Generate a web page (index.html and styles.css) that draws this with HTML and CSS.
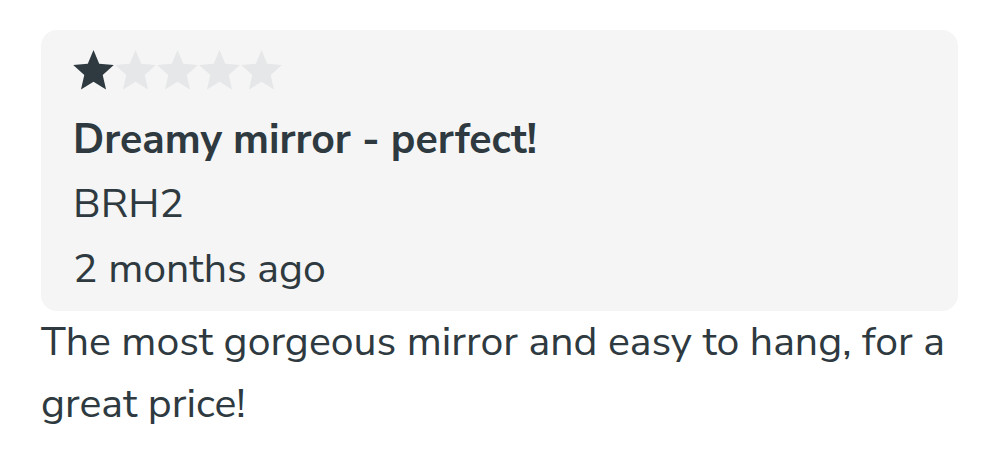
FILE: index.html
```html
<!DOCTYPE html>
<html lang="en">
<head>
<meta charset="utf-8">
<link rel="stylesheet" href="styles.css">
</head>
<body>
<div class="review">
  <div class="card">
    <div class="stars">
      <svg class="star on" viewBox="1.9 2 20.2 19.2" preserveAspectRatio="none"><path d="M12 17.27L18.18 21l-1.64-7.03L22 9.24l-7.19-.61L12 2 9.19 8.63 2 9.24l5.46 4.73L5.82 21z"/></svg>
      <svg class="star" viewBox="1.9 2 20.2 19.2" preserveAspectRatio="none"><path d="M12 17.27L18.18 21l-1.64-7.03L22 9.24l-7.19-.61L12 2 9.19 8.63 2 9.24l5.46 4.73L5.82 21z"/></svg>
      <svg class="star" viewBox="1.9 2 20.2 19.2" preserveAspectRatio="none"><path d="M12 17.27L18.18 21l-1.64-7.03L22 9.24l-7.19-.61L12 2 9.19 8.63 2 9.24l5.46 4.73L5.82 21z"/></svg>
      <svg class="star" viewBox="1.9 2 20.2 19.2" preserveAspectRatio="none"><path d="M12 17.27L18.18 21l-1.64-7.03L22 9.24l-7.19-.61L12 2 9.19 8.63 2 9.24l5.46 4.73L5.82 21z"/></svg>
      <svg class="star" viewBox="1.9 2 20.2 19.2" preserveAspectRatio="none"><path d="M12 17.27L18.18 21l-1.64-7.03L22 9.24l-7.19-.61L12 2 9.19 8.63 2 9.24l5.46 4.73L5.82 21z"/></svg>
    </div>
    <h2 class="title">Dreamy mirror - perfect!</h2>
    <div class="author">BRH2</div>
    <div class="date">2 months ago</div>
  </div>
  <p class="body">The most gorgeous mirror and easy to hang, for a great price!</p>
</div>
</body>
</html>
```
FILE: styles.css
```css
html, body {
  margin: 0;
  padding: 0;
  background: #ffffff;
}
body {
  font-family: "Nunito Sans", Lato, "Noto Sans", sans-serif;
  color: #2e3a40;
}
.review {
  padding: 30px 42px 0 41px;
}
.card {
  background: #f5f5f5;
  border-radius: 16px;
  padding: 20px 31px 9px 32px;
}
.stars {
  display: flex;
  gap: 1px;
  height: 40px;
}
.star {
  width: 41px;
  height: 40px;
  fill: #e6e7e8;
}
.star.on {
  fill: #2e3a40;
}
.title {
  margin: 17.5px 0 0;
  font-size: 41px;
  font-weight: 700;
  line-height: 64px;
}
.author {
  font-size: 41px;
  line-height: 64px;
}
.date {
  font-size: 41px;
  line-height: 66px;
}
.body {
  margin: 0;
  font-size: 41px;
  line-height: 62px;
}
```
